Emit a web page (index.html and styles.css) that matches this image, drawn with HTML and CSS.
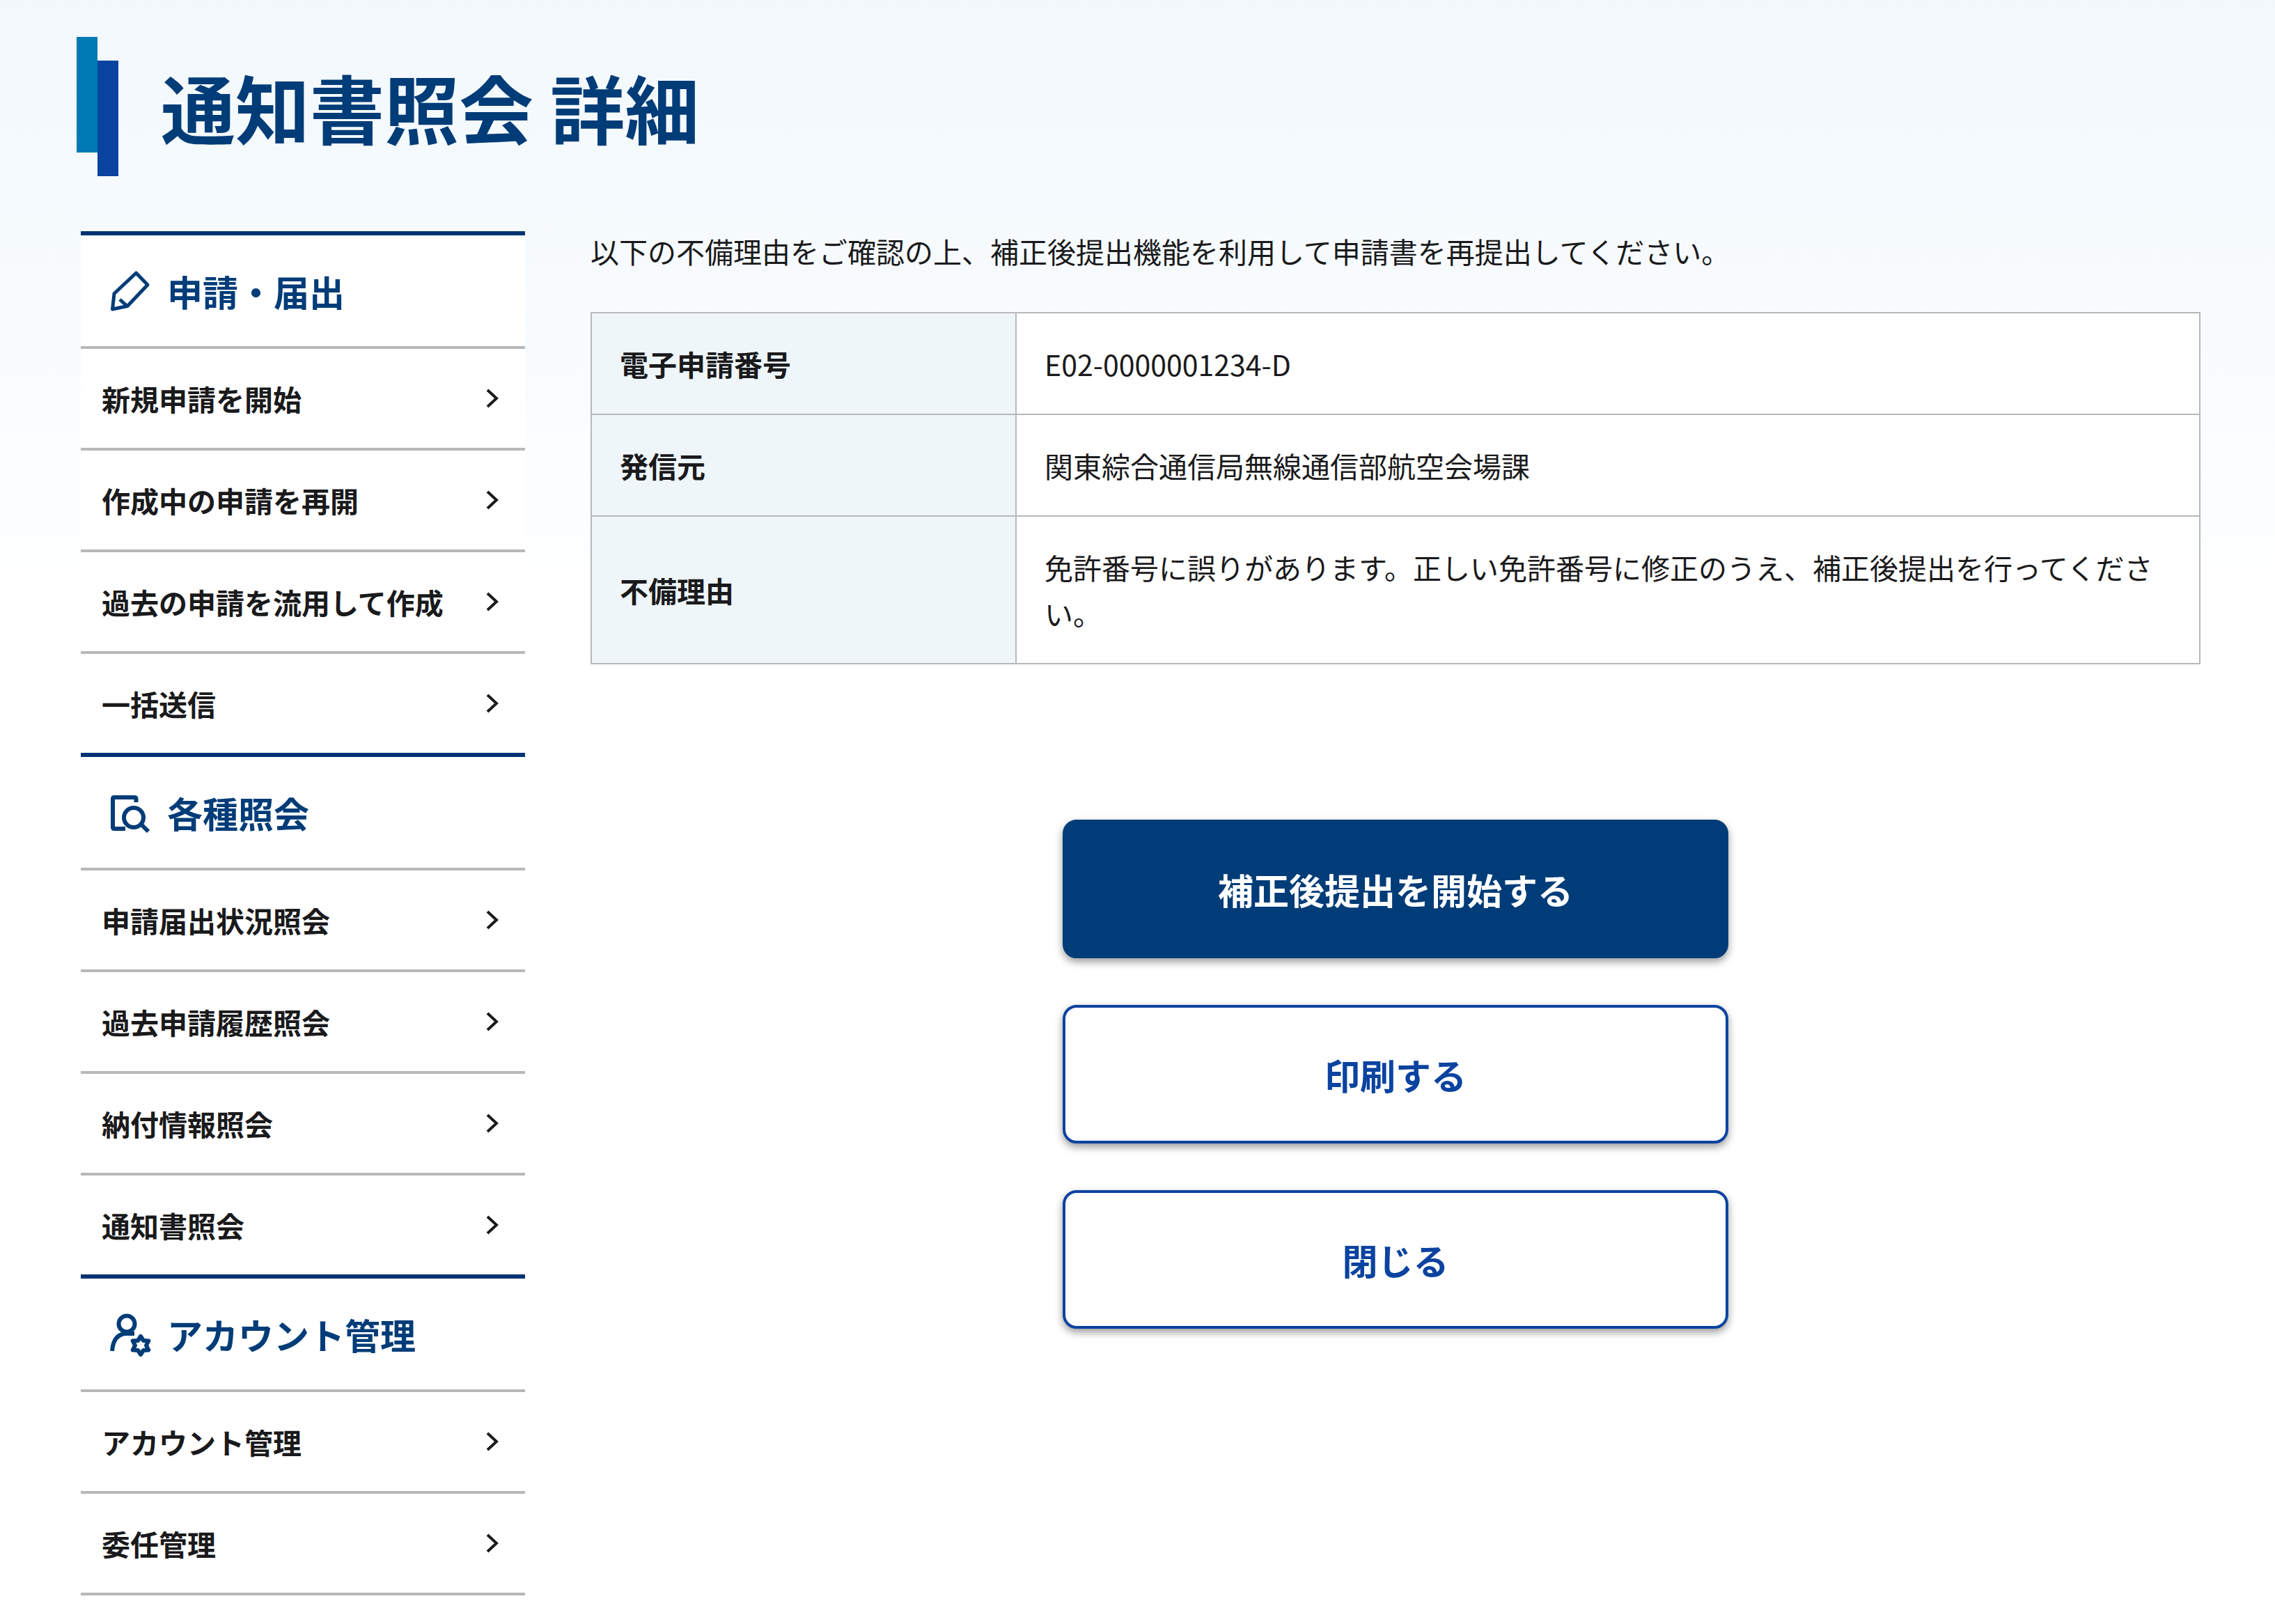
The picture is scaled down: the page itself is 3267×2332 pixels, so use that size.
FILE: index.html
```html
<!DOCTYPE html>
<html lang="ja">
<head>
<meta charset="utf-8">
<meta name="viewport" content="width=device-width, initial-scale=1">
<title>通知書照会 詳細</title>
<link rel="stylesheet" href="styles.css">
</head>
<body>
<header class="page-header">
  <span class="mark" aria-hidden="true"><span class="mark-bar mark-bar-light"></span><span class="mark-bar mark-bar-dark"></span></span>
  <h1 class="page-title">通知書照会 詳細</h1>
</header>
<div class="layout">
  <nav class="side-nav" aria-label="メニュー">
    <section class="nav-group">
      <h2 class="nav-heading">
        <svg class="nav-icon" viewBox="16 16 64 64" aria-hidden="true"><path d="M55.5 22 L72 39 L43 69.5 L21.5 74 L24 51.5 Z M32 60 L43 70"/></svg>
        申請・届出
      </h2>
      <ul class="nav-list">
        <li><a class="nav-link" href="#">新規申請を開始<svg class="chevron" viewBox="0 0 20 30" aria-hidden="true"><path d="M3 3 L16 15 L3 27"/></svg></a></li>
        <li><a class="nav-link" href="#">作成中の申請を再開<svg class="chevron" viewBox="0 0 20 30" aria-hidden="true"><path d="M3 3 L16 15 L3 27"/></svg></a></li>
        <li><a class="nav-link" href="#">過去の申請を流用して作成<svg class="chevron" viewBox="0 0 20 30" aria-hidden="true"><path d="M3 3 L16 15 L3 27"/></svg></a></li>
        <li><a class="nav-link" href="#">一括送信<svg class="chevron" viewBox="0 0 20 30" aria-hidden="true"><path d="M3 3 L16 15 L3 27"/></svg></a></li>
      </ul>
    </section>
    <section class="nav-group">
      <h2 class="nav-heading">
        <svg class="nav-icon nav-icon-bold" viewBox="16 14 64 64" aria-hidden="true"><path d="M55.5 31 V26 Q55.5 24 53 24 H24 Q22 24 22 26 V67 Q22 69 24 69 H40"/><circle cx="52" cy="53" r="14"/><path d="M62 62 L73 73"/></svg>
        各種照会
      </h2>
      <ul class="nav-list">
        <li><a class="nav-link" href="#">申請届出状況照会<svg class="chevron" viewBox="0 0 20 30" aria-hidden="true"><path d="M3 3 L16 15 L3 27"/></svg></a></li>
        <li><a class="nav-link" href="#">過去申請履歴照会<svg class="chevron" viewBox="0 0 20 30" aria-hidden="true"><path d="M3 3 L16 15 L3 27"/></svg></a></li>
        <li><a class="nav-link" href="#">納付情報照会<svg class="chevron" viewBox="0 0 20 30" aria-hidden="true"><path d="M3 3 L16 15 L3 27"/></svg></a></li>
        <li><a class="nav-link" href="#">通知書照会<svg class="chevron" viewBox="0 0 20 30" aria-hidden="true"><path d="M3 3 L16 15 L3 27"/></svg></a></li>
      </ul>
    </section>
    <section class="nav-group">
      <h2 class="nav-heading">
        <svg class="nav-icon nav-icon-bold" viewBox="16 14 64 64" aria-hidden="true"><circle cx="42" cy="31" r="11.5"/><path d="M21 70 Q23 45 42 45 H53"/><path d="M62 49 L66 55 L73.3 55.5 L70 62 L73.3 68.5 L66 69 L62 75 L58 69 L50.7 68.5 L54 62 L50.7 55.5 L58 55 Z"/></svg>
        アカウント管理
      </h2>
      <ul class="nav-list">
        <li><a class="nav-link" href="#">アカウント管理<svg class="chevron" viewBox="0 0 20 30" aria-hidden="true"><path d="M3 3 L16 15 L3 27"/></svg></a></li>
        <li><a class="nav-link" href="#">委任管理<svg class="chevron" viewBox="0 0 20 30" aria-hidden="true"><path d="M3 3 L16 15 L3 27"/></svg></a></li>
      </ul>
    </section>
  </nav>
  <main class="content">
    <p class="lead">以下の不備理由をご確認の上、補正後提出機能を利用して申請書を再提出してください。</p>
    <table class="detail">
      <tbody>
        <tr><th scope="row">電子申請番号</th><td>E02-0000001234-D</td></tr>
        <tr><th scope="row">発信元</th><td>関東綜合通信局無線通信部航空会場課</td></tr>
        <tr><th scope="row">不備理由</th><td>免許番号に誤りがあります。正しい免許番号に修正のうえ、補正後提出を行ってください。</td></tr>
      </tbody>
    </table>
    <div class="actions">
      <button class="button button-primary" type="button">補正後提出を開始する</button>
      <button class="button" type="button">印刷する</button>
      <button class="button" type="button">閉じる</button>
    </div>
  </main>
</div>
</body>
</html>
```

FILE: styles.css
```css
:root {
  --navy: #003c78;
  --blue: #0b43a0;
  --teal: #007ab2;
  --rule: #b8b8bb;
  --text: #1a1a1c;
}

* {
  box-sizing: border-box;
}

body {
  margin: 0;
  background: #fff linear-gradient(#f2f8fc 0, #f7fbfe 400px, #fff 900px) no-repeat;
  color: var(--text);
  font-family: "Noto Sans CJK JP", "Noto Sans", sans-serif;
  font-size: 41px;
  line-height: 66px;
}

.page-header {
  display: flex;
  align-items: center;
  gap: 61px;
  padding: 53px 110px 79px;
}

.mark {
  display: flex;
  height: 200px;
}

.mark-bar {
  width: 30px;
  height: 166px;
}

.mark-bar-light {
  background: var(--teal);
}

.mark-bar-dark {
  align-self: flex-end;
  background: var(--blue);
}

.page-title {
  margin: 0;
  color: var(--navy);
  font-size: 107px;
  line-height: 160px;
}

.layout {
  display: flex;
  align-items: flex-start;
  gap: 94px;
  padding: 0 107px 40px 116px;
}

.side-nav {
  flex: 0 0 638px;
  border-bottom: 4px solid var(--rule);
  background: #fff;
}

.nav-heading {
  display: flex;
  align-items: center;
  gap: 20px;
  height: 165px;
  margin: 0;
  padding: 0 40px;
  border-top: 6px solid #003373;
  color: var(--navy);
  font-size: 51px;
}

.nav-icon {
  width: 64px;
  height: 64px;
  fill: none;
  stroke: currentColor;
  stroke-width: 5;
  stroke-linejoin: round;
}

.nav-icon-bold {
  stroke-width: 6;
}

.nav-list {
  margin: 0;
  padding: 0;
  list-style: none;
}

.nav-link {
  display: flex;
  align-items: center;
  justify-content: space-between;
  height: 146px;
  padding: 0 37px 0 30px;
  border-top: 4px solid var(--rule);
  color: var(--text);
  font-weight: 700;
  text-decoration: none;
}

.chevron {
  width: 20px;
  height: 30px;
  fill: none;
  stroke: currentColor;
  stroke-width: 4;
}

.content {
  flex: 1;
  min-width: 0;
}

.lead {
  margin: 0 0 60px;
  line-height: 56px;
}

.detail {
  width: 100%;
  border-collapse: collapse;
}

.detail th,
.detail td {
  padding: 39px 40px;
  border: 2px solid var(--rule);
  text-align: left;
}

.detail th {
  width: 610px;
  background: #eef6fa;
}

.detail td {
  background: #fff;
}

.actions {
  display: flex;
  flex-direction: column;
  align-items: center;
  gap: 67px;
  margin-top: 223px;
}

.button {
  width: 100%;
  max-width: 956px;
  height: 199px;
  border: 4px solid var(--blue);
  border-radius: 20px;
  background: #fff;
  box-shadow: 0 5px 12px rgba(0, 0, 0, 0.4);
  color: var(--blue);
  font-family: inherit;
  font-size: 51px;
  font-weight: 700;
}

.button-primary {
  border-color: var(--navy);
  background: var(--navy);
  color: #fff;
}
```
